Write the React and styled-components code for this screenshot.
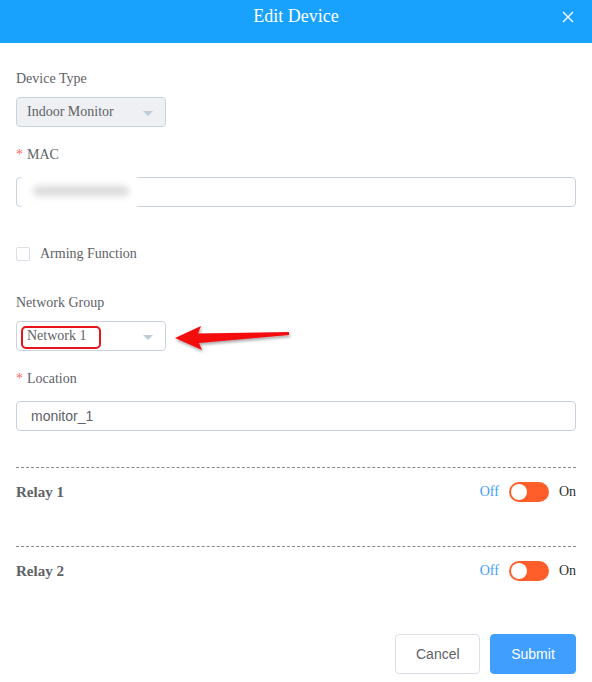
import React from 'react';
import styled, { createGlobalStyle } from 'styled-components';

const GlobalStyle = createGlobalStyle`
  html, body {
    margin: 0;
    padding: 0;
    background: #ffffff;
  }
  body {
    font-family: "Liberation Serif", "Times New Roman", serif;
  }
`;

const Dialog = styled.div`
  width: 592px;
  height: 682px;
  background: #fff;
  display: flex;
  flex-direction: column;
  overflow: hidden;
`;

const Header = styled.div`
  flex-shrink: 0;
  height: 43px;
  background: #19a1fe;
  display: flex;
  align-items: center;
  justify-content: center;
  position: relative;
  color: #fff;
  font-size: 18px;
  padding-bottom: 11px;
  box-sizing: border-box;
`;

const Close = styled.button`
  position: absolute;
  right: 16px;
  top: 9px;
  width: 16px;
  height: 16px;
  padding: 0;
  border: none;
  background: none;
  cursor: pointer;
  display: flex;
  align-items: center;
  justify-content: center;
`;

const Body = styled.div`
  padding: 26px 16px 0 16px;
  display: flex;
  flex-direction: column;
`;

const Field = styled.div`
  display: flex;
  flex-direction: column;
  margin-bottom: ${p => p.$mb ?? 18}px;
  position: relative;
`;

const Label = styled.div`
  height: 20px;
  line-height: 20px;
  font-size: 14px;
  color: #606266;
  margin-bottom: ${p => p.$gap || 8}px;
`;

const Star = styled.span`
  color: #f56c6c;
  margin-right: 4px;
`;

const SelectBox = styled.div`
  width: 150px;
  height: 30px;
  box-sizing: border-box;
  border: 1px solid #c9d3de;
  border-radius: 4px;
  background: ${p => (p.$disabled ? '#eef0f3' : '#fff')};
  display: flex;
  align-items: center;
  justify-content: space-between;
  padding: 0 12px 0 10px;
  font-size: 14px;
  color: #606266;
  position: relative;
`;

const Caret = styled.span`
  width: 0;
  height: 0;
  border-left: 5px solid transparent;
  border-right: 5px solid transparent;
  border-top: 5px solid #c0c9d6;
  margin-top: 2px;
`;

const Input = styled.div`
  height: 30px;
  box-sizing: border-box;
  border: 1px solid #c9d3de;
  border-radius: 4px;
  display: flex;
  align-items: center;
  padding: 0 14px;
  font-family: "Liberation Sans", Arial, sans-serif;
  font-size: 14px;
  color: #606266;
`;

const Mask = styled.div`
  position: absolute;
  left: 5px;
  top: 23px;
  width: 116px;
  height: 48px;
  background: #fff;
  filter: blur(1px);
  display: flex;
  align-items: center;
  padding-left: 12px;
  box-sizing: border-box;
`;

const MaskBar = styled.div`
  width: 96px;
  height: 10px;
  margin-top: -2px;
  border-radius: 5px;
  background: #dadada;
  filter: blur(3px);
`;

const CheckRow = styled.label`
  display: flex;
  align-items: center;
  height: 20px;
  margin: 37px 0 29px;
  font-size: 14px;
  color: #606266;
`;

const CheckBox = styled.span`
  width: 12px;
  height: 12px;
  border: 1px solid #dcdfe6;
  border-radius: 2px;
  margin-right: 10px;
`;

const Highlight = styled.span`
  position: absolute;
  left: 4px;
  top: 4px;
  width: 80px;
  height: 23px;
  border: 2px solid #e8141b;
  border-radius: 5px;
  box-sizing: border-box;
`;

const Arrow = styled.svg`
  position: absolute;
  left: 156px;
  top: -8px;
  overflow: visible;
`;

const Section = styled.div`
  border-top: 1px dashed #8a8a8a;
  padding: 14px 0 ${p => p.$pb}px;
  display: flex;
  align-items: center;
  justify-content: space-between;
  height: 20px;
`;

const RelayName = styled.div`
  font-weight: bold;
  font-size: 15px;
  color: #606266;
`;

const SwitchWrap = styled.div`
  display: flex;
  align-items: center;
  font-size: 14px;
`;

const SwitchText = styled.span`
  color: ${p => (p.$active ? '#409eff' : '#303133')};
  margin: 0 10px;
  &:last-child {
    margin-right: 0;
  }
`;

const Track = styled.span`
  width: 40px;
  height: 20px;
  border-radius: 10px;
  background: #ff5d29;
  position: relative;
  display: inline-block;
`;

const Knob = styled.span`
  position: absolute;
  left: 2px;
  top: 2px;
  width: 16px;
  height: 16px;
  border-radius: 50%;
  background: #fff;
`;

const Footer = styled.div`
  display: flex;
  justify-content: flex-end;
  gap: 10px;
  padding: 0 16px;
  margin-top: 53px;
`;

const Button = styled.button`
  height: 40px;
  box-sizing: border-box;
  padding: 0 20px;
  border-radius: 4px;
  font-family: "Liberation Sans", Arial, sans-serif;
  font-size: 14px;
  border: 1px solid ${p => (p.$primary ? '#409eff' : '#dcdfe6')};
  background: ${p => (p.$primary ? '#409eff' : '#fff')};
  color: ${p => (p.$primary ? '#fff' : '#606266')};
  width: ${p => (p.$primary ? 86 : 85)}px;
`;

const Toggle = () => (
  <SwitchWrap>
    <SwitchText $active>Off</SwitchText>
    <Track>
      <Knob />
    </Track>
    <SwitchText>On</SwitchText>
  </SwitchWrap>
);

export default function App() {
  return (
    <>
      <GlobalStyle />
      <Dialog>
        <Header>
          Edit Device
          <Close aria-label="close">
            <svg width="12" height="12" viewBox="0 0 12 12">
              <path d="M1 1L11 11M11 1L1 11" stroke="#fff" strokeWidth="1.4" />
            </svg>
          </Close>
        </Header>
        <Body>
          <Field>
            <Label>Device Type</Label>
            <SelectBox $disabled>
              Indoor Monitor
              <Caret />
            </SelectBox>
          </Field>

          <Field $mb={0}>
            <Label $gap={12}>
              <Star>*</Star>MAC
            </Label>
            <Input />
            <Mask>
              <MaskBar />
            </Mask>
          </Field>

          <CheckRow>
            <CheckBox />
            Arming Function
          </CheckRow>

          <Field>
            <Label>Network Group</Label>
            <SelectBox>
              Network 1
              <Caret />
              <Highlight />
              <Arrow width="125" height="45" viewBox="0 0 125 45">
                <defs>
                  <filter id="sh" x="-20%" y="-50%" width="140%" height="200%">
                    <feDropShadow dx="1" dy="2" stdDeviation="1.5" floodColor="#000" floodOpacity="0.35" />
                  </filter>
                </defs>
                <path
                  d="M2 24 L28 12 L25 19.5 L116 18 L116 21 L26 29 L29 36 Z"
                  fill="#f4090f"
                  filter="url(#sh)"
                />
              </Arrow>
            </SelectBox>
          </Field>

          <Field $mb={36}>
            <Label $gap={12}>
              <Star>*</Star>Location
            </Label>
            <Input>monitor_1</Input>
          </Field>

          <Section $pb={44}>
            <RelayName>Relay 1</RelayName>
            <Toggle />
          </Section>
          <Section $pb={0}>
            <RelayName>Relay 2</RelayName>
            <Toggle />
          </Section>
        </Body>
        <Footer>
          <Button>Cancel</Button>
          <Button $primary>Submit</Button>
        </Footer>
      </Dialog>
    </>
  );
}
